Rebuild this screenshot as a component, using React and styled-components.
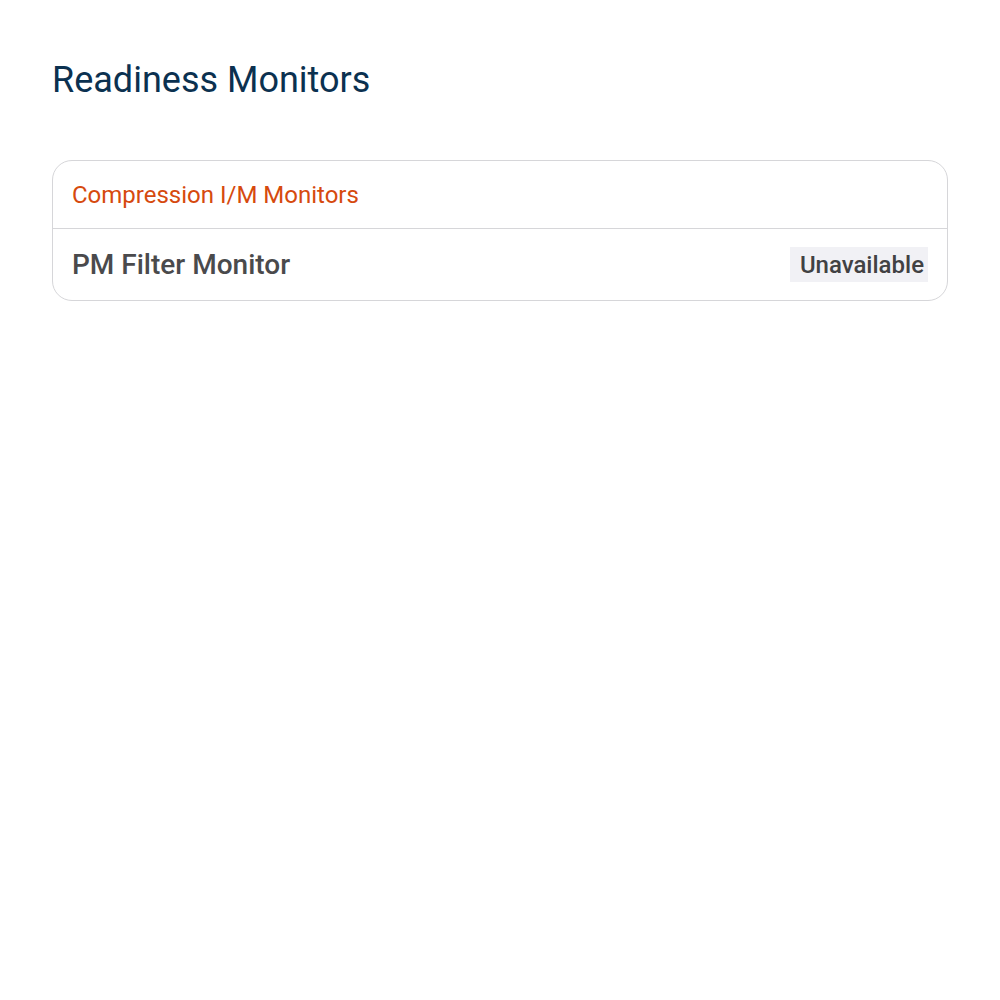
import React from 'react'
import styled, { createGlobalStyle } from 'styled-components'

const GlobalStyle = createGlobalStyle`
	body {
		margin: 0;
		background: #ffffff;
		font-family: Roboto, 'Noto Sans', sans-serif;
	}
`

const Page = styled.div`
	padding: 56px 52px;
`

const Title = styled.h1`
	margin: 0 0 56px;
	font-size: 36px;
	font-weight: 400;
	line-height: 48px;
	color: #0b3150;
`

const Card = styled.section`
	border: 1px solid #d6d6d9;
	border-radius: 20px;
	overflow: hidden;
`

const CardHeader = styled.div`
	display: flex;
	align-items: center;
	height: 67px;
	padding: 0 19px;
	border-bottom: 1px solid #d6d6d9;
	font-size: 24px;
	color: #d64a0e;
`

const Row = styled.div`
	display: flex;
	align-items: center;
	justify-content: space-between;
	height: 71px;
	padding: 0 19px;
`

const RowLabel = styled.span`
	font-size: 28px;
	font-weight: 500;
	color: #4a4a4c;
`

const Badge = styled.span`
	display: inline-flex;
	align-items: center;
	height: 35px;
	padding: 0 4px 0 10px;
	background: #f1f1f5;
	font-size: 24px;
	font-weight: 500;
	color: #414143;
`

const monitors = [{ name: 'PM Filter Monitor', status: 'Unavailable' }]

const App = () => {
	return (
		<>
			<GlobalStyle />
			<Page>
				<Title>Readiness Monitors</Title>
				<Card>
					<CardHeader>Compression I/M Monitors</CardHeader>
					{monitors.map((m) => (
						<Row key={m.name}>
							<RowLabel>{m.name}</RowLabel>
							<Badge>{m.status}</Badge>
						</Row>
					))}
				</Card>
			</Page>
		</>
	)
}

export default App
